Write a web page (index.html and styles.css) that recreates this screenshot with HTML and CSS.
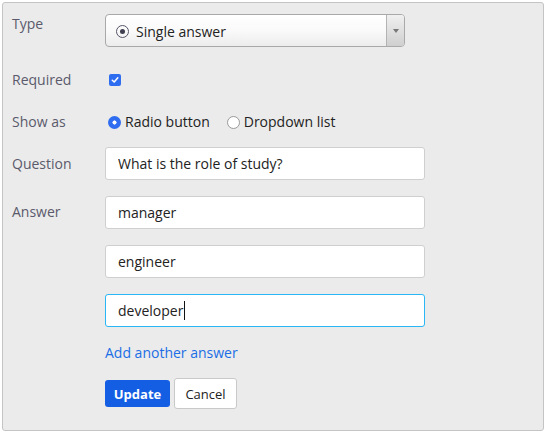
FILE: index.html
```html
<!DOCTYPE html>
<html>
<head>
<meta charset="utf-8">
<link rel="stylesheet" href="styles.css">
</head>
<body>
<div class="panel">
  <div class="row row-type">
    <div class="label label-top">Type</div>
    <div class="select">
      <div class="select-value">
        <span class="ring-icon"><span class="ring-dot"></span></span>
        <span>Single answer</span>
      </div>
      <div class="select-arrow"><span class="tri"></span></div>
    </div>
  </div>
  <div class="row row-req">
    <div class="label">Required</div>
    <span class="check">
      <svg width="8" height="8" viewBox="0 0 8 8"><path d="M1.3 4.2 L3.2 6 L6.8 1.8" fill="none" stroke="#fff" stroke-width="1.5" stroke-linecap="round" stroke-linejoin="round"/></svg>
    </span>
  </div>
  <div class="row row-show">
    <div class="label">Show as</div>
    <div class="radios">
      <span class="radio on"></span><span class="radio-text">Radio button</span>
      <span class="radio off"></span><span class="radio-text">Dropdown list</span>
    </div>
  </div>
  <div class="row row-q">
    <div class="label">Question</div>
    <input class="field" type="text" value="What is the role of study?">
  </div>
  <div class="row row-a">
    <div class="label label-a">Answer</div>
    <div class="answers">
      <input class="field" type="text" value="manager">
      <input class="field" type="text" value="engineer">
      <div class="field focus">developer<span class="caret"></span></div>
    </div>
  </div>
  <div class="row row-link">
    <div class="label"></div>
    <a class="add-link" href="#">Add another answer</a>
  </div>
  <div class="row row-btn">
    <div class="label"></div>
    <div class="buttons">
      <button class="btn primary">Update</button>
      <button class="btn secondary">Cancel</button>
    </div>
  </div>
</div>
</body>
</html>
```
FILE: styles.css
```css
html, body {
  margin: 0;
  padding: 0;
  background: #fff;
}
body {
  padding: 2px;
  font-family: "Open Sans", "Noto Sans", sans-serif;
  font-size: 14px;
  color: #222;
}
.panel {
  background: #ebebeb;
  border: 1px solid #c4c4c4;
  border-radius: 3px;
  padding: 11px 0 0 9px;
  box-sizing: border-box;
  width: 542px;
  height: 429px;
}
.row {
  display: flex;
  align-items: center;
}
.label {
  width: 93px;
  flex: none;
  color: #5a5a6b;
  line-height: 20px;
}
.row-type {
  align-items: flex-start;
}
.label-top {
  margin-top: 0;
}
.select {
  width: 300px;
  height: 33px;
  box-sizing: border-box;
  border: 1px solid #a9a9a9;
  border-radius: 4px;
  background: linear-gradient(#ffffff 0%, #fafafa 50%, #ececec 100%);
  display: flex;
  overflow: hidden;
}
.select-value {
  flex: 1;
  display: flex;
  align-items: center;
  padding-left: 10px;
  gap: 7px;
  font-size: 14px;
  color: #222;
  padding-top: 1px;
}
.ring-icon {
  width: 13px;
  height: 13px;
  box-sizing: border-box;
  border: 1.6px solid #55556a;
  border-radius: 50%;
  display: flex;
  align-items: center;
  justify-content: center;
}
.ring-dot {
  width: 5px;
  height: 5px;
  border-radius: 50%;
  background: #3f3f50;
}
.select-arrow {
  width: 17px;
  border-left: 1px solid #b3b3b3;
  background: linear-gradient(#f0f0f0, #cfcfcf);
  display: flex;
  align-items: center;
  justify-content: center;
}
.tri {
  width: 0;
  height: 0;
  border-left: 3px solid transparent;
  border-right: 3px solid transparent;
  border-top: 4px solid #777;
}
.row-req {
  margin-top: 23px;
  height: 20px;
}
.check {
  margin-left: 4px;
  width: 12px;
  height: 12px;
  border-radius: 2px;
  background: #2f6df0;
  display: flex;
  align-items: center;
  justify-content: center;
}
.check svg { display: block; }
.row-show {
  margin-top: 22px;
  height: 20px;
}
.radios {
  display: flex;
  align-items: center;
}
.radio {
  width: 13px;
  height: 13px;
  box-sizing: border-box;
  border-radius: 50%;
  margin-left: 3px;
  display: inline-block;
}
.radio.on {
  background: radial-gradient(circle, #fff 0 1.8px, #2f6df0 2.3px);
}
.radio.off {
  background: #fff;
  border: 1px solid #9a9a9a;
  margin-left: 17px;
}
.radio-text {
  margin-left: 4px;
  color: #222;
  line-height: 20px;
}
.row-q {
  margin-top: 15px;
}
.field {
  width: 320px;
  height: 33px;
  box-sizing: border-box;
  border: 1px solid #cfcfcf;
  border-radius: 3px;
  background: #fff;
  padding: 0 12px;
  font-family: inherit;
  font-size: 14px;
  color: #222;
  outline: none;
  margin: 0;
  display: flex;
  align-items: center;
}
.field.focus {
  border-color: #2ab7f5;
  line-height: 20px;
}
.caret {
  display: inline-block;
  width: 1px;
  height: 19px;
  background: #111;
  margin-left: 1px;
}
.row-a {
  margin-top: 16px;
  align-items: flex-start;
}
.label-a {
  margin-top: 6px;
}
.answers {
  display: flex;
  flex-direction: column;
  gap: 16px;
}
.row-link {
  margin-top: 16px;
  height: 20px;
}
.add-link {
  color: #1a6ee6;
  text-decoration: none;
  line-height: 20px;
}
.row-btn {
  margin-top: 15px;
}
.buttons {
  display: flex;
  align-items: center;
  gap: 4px;
}
.btn {
  font-family: inherit;
  font-size: 13px;
  border-radius: 3px;
  margin: 0;
  padding: 0;
  cursor: pointer;
}
.btn.primary {
  width: 65px;
  height: 27px;
  background: #145ee4;
  color: #fff;
  border: none;
  font-weight: 700;
}
.btn.secondary {
  width: 63px;
  height: 31px;
  background: #fff;
  color: #222;
  border: 1px solid #c9c9c9;
}
```
